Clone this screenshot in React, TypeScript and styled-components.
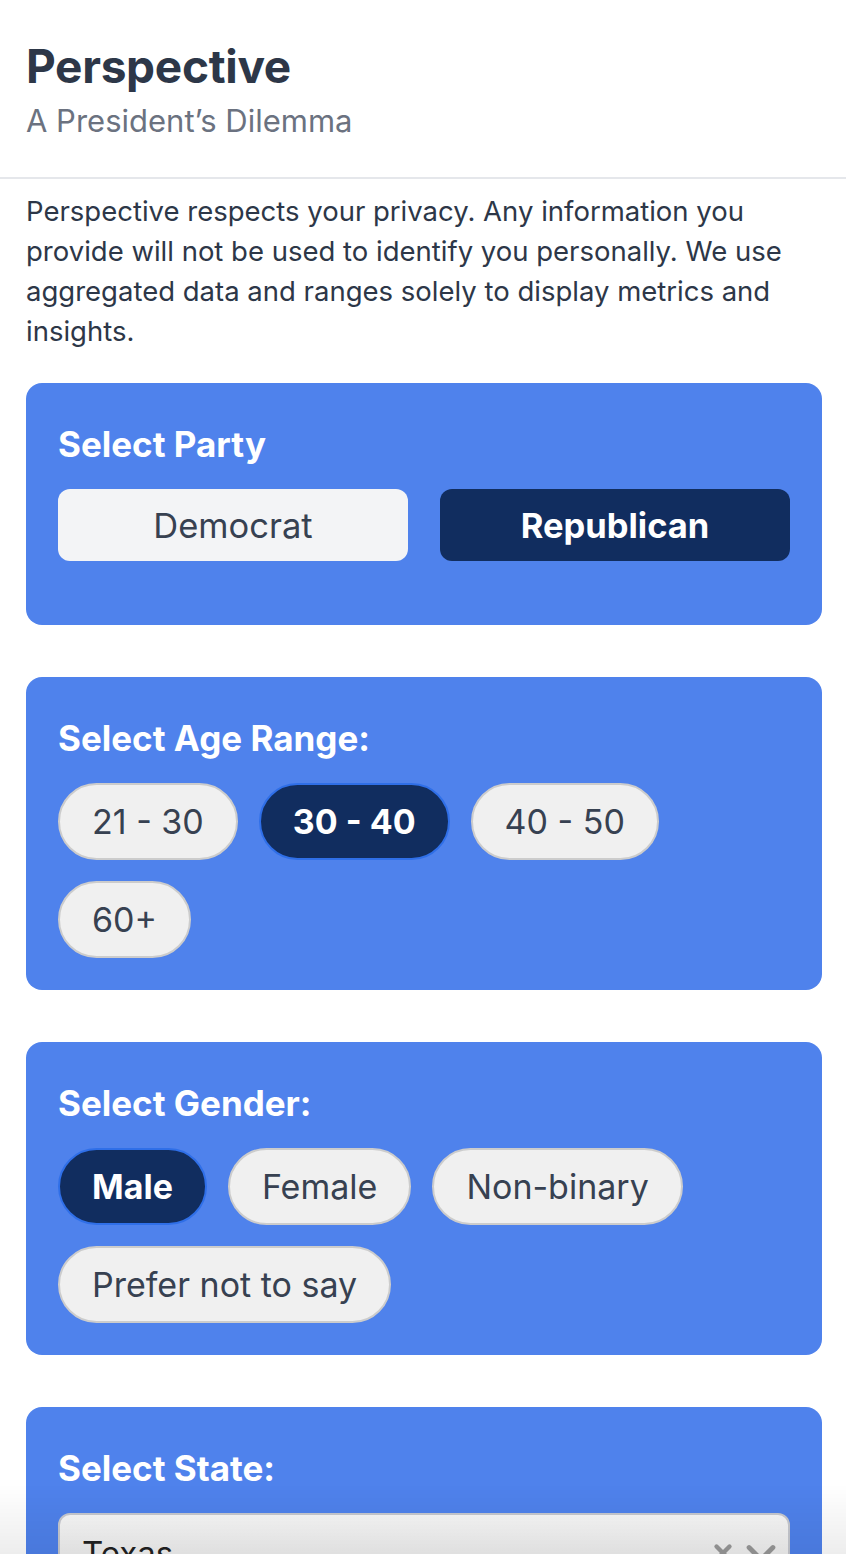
import styled, { createGlobalStyle } from 'styled-components';

const GlobalStyle = createGlobalStyle`
  html, body {
    margin: 0;
    padding: 0;
    background: #ffffff;
    font-family: Inter, 'Noto Sans', 'Liberation Sans', sans-serif;
  }
  * {
    box-sizing: border-box;
  }
`;

const Header = styled.header`
  padding: 38px 26px 0;
  height: 179px;
  border-bottom: 2px solid #e5e7eb;
`;

const Title = styled.h1`
  margin: 0;
  font-size: 46px;
  line-height: 56px;
  font-weight: 700;
  color: #2d3748;
  letter-spacing: -0.3px;
`;

const Subtitle = styled.p`
  margin: 0;
  font-size: 31px;
  line-height: 54px;
  color: #6b7280;
  font-weight: 400;
`;

const Main = styled.main`
  padding: 12px 24px 40px 26px;
  display: flex;
  flex-direction: column;
  gap: 52px;
`;

const Notice = styled.p`
  margin: 0 0 -20px;
  font-size: 27.5px;
  line-height: 40px;
  color: #2d3748;
`;

const Card = styled.section<{ $extraBottom?: boolean }>`
  background: #4f82ec;
  border-radius: 16px;
  padding: 35px 32px ${(p) => (p.$extraBottom ? '64px' : '32px')};
  display: flex;
  flex-direction: column;
  gap: 19px;
`;

const Label = styled.h2`
  margin: 0;
  font-size: 35px;
  line-height: 52px;
  font-weight: 700;
  color: #ffffff;
`;

const PartyRow = styled.div`
  display: grid;
  grid-template-columns: 1fr 1fr;
  gap: 32px;
`;

const PartyButton = styled.button<{ $active?: boolean }>`
  height: 72px;
  border: none;
  border-radius: 12px;
  font-family: inherit;
  font-size: 34.5px;
  font-weight: ${(p) => (p.$active ? 700 : 400)};
  background: ${(p) => (p.$active ? '#112d5f' : '#f3f4f6')};
  color: ${(p) => (p.$active ? '#ffffff' : '#374151')};
  cursor: pointer;
`;

const PillRow = styled.div`
  display: flex;
  flex-wrap: wrap;
  gap: 21px;
`;

const Pill = styled.button<{ $active?: boolean }>`
  height: 77px;
  padding: 0 32px;
  border-radius: 999px;
  border: 2px solid ${(p) => (p.$active ? '#2f6fe8' : '#cccccc')};
  background: ${(p) => (p.$active ? '#112d5f' : '#f0f0f0')};
  color: ${(p) => (p.$active ? '#ffffff' : '#374151')};
  font-family: inherit;
  font-size: 34px;
  font-weight: ${(p) => (p.$active ? 700 : 400)};
  cursor: pointer;
`;

const SelectBox = styled.div`
  height: 80px;
  border: 2px solid #c7c9cf;
  border-radius: 12px;
  background: linear-gradient(#f7f7f7, #ececec);
  display: flex;
  align-items: center;
  padding: 0 10px 0 22px;
`;

const SelectValue = styled.span`
  flex: 1;
  font-size: 33px;
  color: #222222;
`;

const SelectIcons = styled.span`
  display: flex;
  align-items: center;
  gap: 8px;
  color: #999999;
`;

const BottomFade = styled.div`
  position: fixed;
  left: 0;
  right: 0;
  bottom: 0;
  height: 70px;
  background: linear-gradient(rgba(0, 0, 0, 0), rgba(0, 0, 0, 0.07));
  pointer-events: none;
`;

const ages = ['21 - 30', '30 - 40', '40 - 50', '60+'];
const genders = ['Male', 'Female', 'Non-binary', 'Prefer not to say'];

export default function App() {
  return (
    <>
      <GlobalStyle />
      <Header>
        <Title>Perspective</Title>
        <Subtitle>A President’s Dilemma</Subtitle>
      </Header>
      <Main>
        <Notice>
          Perspective respects your privacy. Any information you provide will
          not be used to identify you personally. We use aggregated data and
          ranges solely to display metrics and insights.
        </Notice>

        <Card $extraBottom>
          <Label>Select Party</Label>
          <PartyRow>
            <PartyButton>Democrat</PartyButton>
            <PartyButton $active>Republican</PartyButton>
          </PartyRow>
        </Card>

        <Card>
          <Label>Select Age Range:</Label>
          <PillRow>
            {ages.map((a) => (
              <Pill key={a} $active={a === '30 - 40'}>
                {a}
              </Pill>
            ))}
          </PillRow>
        </Card>

        <Card>
          <Label>Select Gender:</Label>
          <PillRow>
            {genders.map((g) => (
              <Pill key={g} $active={g === 'Male'}>
                {g}
              </Pill>
            ))}
          </PillRow>
        </Card>

        <Card>
          <Label>Select State:</Label>
          <SelectBox>
            <SelectValue>Texas</SelectValue>
            <SelectIcons>
              <svg width="26" height="26" viewBox="0 0 24 24" fill="none" stroke="currentColor" strokeWidth="4" strokeLinecap="round">
                <path d="M6 6l12 12M18 6L6 18" />
              </svg>
              <svg width="34" height="26" viewBox="0 0 30 24" fill="none" stroke="currentColor" strokeWidth="4.5" strokeLinecap="round" strokeLinejoin="round">
                <path d="M4 7l11 11L26 7" />
              </svg>
            </SelectIcons>
          </SelectBox>
        </Card>
      </Main>
      <BottomFade />
    </>
  );
}
